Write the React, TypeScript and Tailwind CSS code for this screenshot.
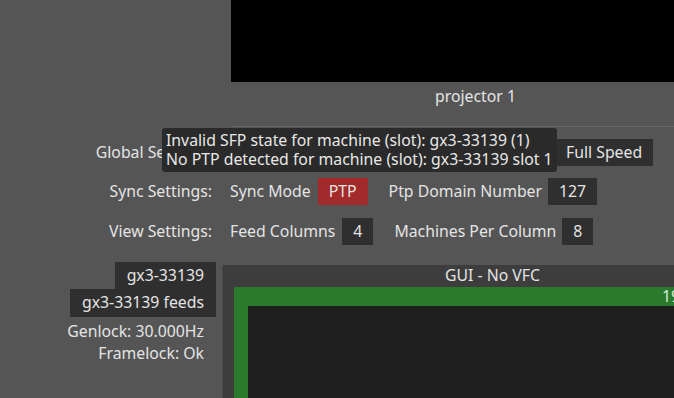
import React from "react";

const Box = ({ children, className = "" }: { children: React.ReactNode; className?: string }) => (
  <div className={`h-[27px] flex items-center whitespace-nowrap bg-[#2f2f2f] px-[11px] ${className}`}>{children}</div>
);

export default function App() {
  return (
    <div className="relative w-[674px] h-[398px] overflow-hidden bg-[#555555] font-['Noto_Sans',sans-serif] text-[15.8px] leading-none text-[#e4e4e4]">
      {/* top: projector preview */}
      <div className="flex h-[127px]">
        <div className="w-[231px] shrink-0" />
        <div className="flex flex-1 flex-col">
          <div className="h-[82px] bg-black" />
          <div className="h-[44px] pl-[204px] pt-[3px] leading-[22px]">projector 1</div>
          <div className="h-px bg-[#696969]" />
        </div>
      </div>

      {/* settings rows */}
      <div className="mt-[12px] flex flex-col gap-[12px] whitespace-nowrap">
        <div className="flex h-[27px] items-center">
          <div className="w-[212px] shrink-0 text-right">Global Settings:</div>
          <div className="ml-[18px] flex items-center">
            <Box className="ml-[325px]">Full Speed</Box>
          </div>
        </div>
        <div className="flex h-[27px] items-center">
          <div className="w-[212px] shrink-0 text-right">Sync Settings:</div>
          <div className="ml-[18px] flex items-center">
            <span>Sync Mode</span>
            <div className="ml-[7px] flex h-[27px] items-center bg-[#a32a2a] px-[11px]">PTP</div>
            <span className="ml-[21px]">Ptp Domain Number</span>
            <Box className="ml-[6px]">127</Box>
          </div>
        </div>
        <div className="mt-px flex h-[27px] items-center">
          <div className="w-[212px] shrink-0 text-right">View Settings:</div>
          <div className="ml-[18px] flex items-center">
            <span>Feed Columns</span>
            <Box className="ml-[7px]">4</Box>
            <span className="ml-[21px]">Machines Per Column</span>
            <Box className="ml-[6px]">8</Box>
          </div>
        </div>
      </div>

      {/* bottom: machine info + feed panel */}
      <div className="mt-[17px] flex h-[136px] whitespace-nowrap">
        <div className="flex w-[216px] shrink-0 flex-col items-end">
          <div className="flex h-[27px] items-center bg-[#2f2f2f] px-3">gx3-33139</div>
          <div className="flex h-[28px] items-center bg-[#2f2f2f] px-3">gx3-33139 feeds</div>
          <div className="mt-[4px] flex flex-col items-end pr-3">
            <div className="flex h-[22px] items-center">Genlock: 30.000Hz</div>
            <div className="flex h-[22px] items-center">Framelock: Ok</div>
          </div>
        </div>
        <div className="ml-[6px] mt-[3px] flex flex-1 flex-col border-l border-[#4a4a4a] bg-[#3d3d3d]">
          <div className="flex h-[22px] shrink-0 items-center pl-[222px]">GUI - No VFC</div>
          <div className="ml-[11px] flex flex-1 flex-col bg-[#2b7a2b]">
            <div className="flex h-[19px] shrink-0 items-center pl-[428px] text-[#d8ecd8]">19</div>
            <div className="ml-[14px] flex-1 bg-[#1f1f1f]" />
          </div>
        </div>
      </div>

      {/* tooltip */}
      <div className="absolute left-[162px] top-[128px] flex h-[44px] w-[395px] flex-col justify-center whitespace-nowrap rounded-[3px] bg-[#2a2a2a] px-[4px] leading-[19px] text-[#e8e8e8]">
        <div>Invalid SFP state for machine (slot): gx3-33139 (1)</div>
        <div>No PTP detected for machine (slot): gx3-33139 slot 1</div>
      </div>
    </div>
  );
}
